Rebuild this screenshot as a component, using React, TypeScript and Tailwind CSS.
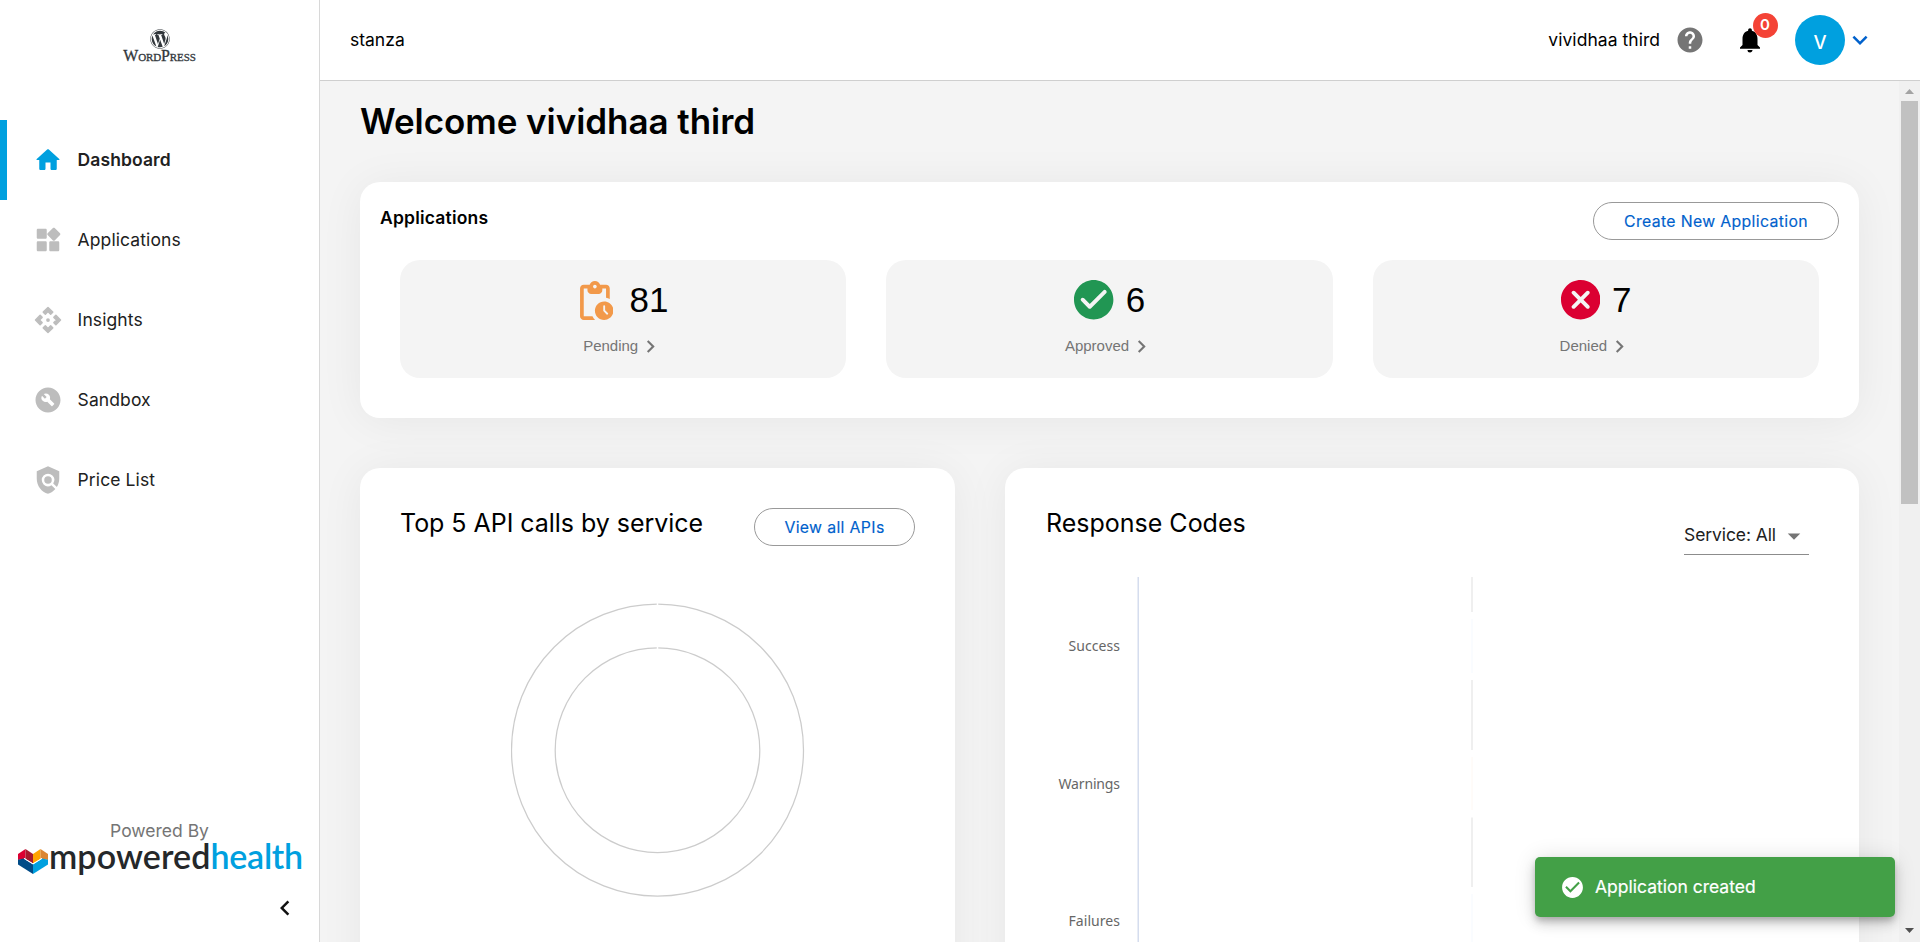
import React from "react";
import { FaWordpress } from "react-icons/fa";
import {
  MdArrowDropDown,
  MdBuildCircle,
  MdCheckCircle,
  MdChevronLeft,
  MdChevronRight,
  MdExpandMore,
  MdHelp,
  MdNotifications,
  MdPolicy,
} from "react-icons/md";

type IconProps = { className?: string };

const HomeIcon = ({ className }: IconProps) => (
  <svg viewBox="0 0 24 24" className={className} fill="currentColor">
    <path d="M10 19v-5h4v5c0 .55.45 1 1 1h3c.55 0 1-.45 1-1v-7h1.700c.46 0 .68-.57.33-.87L12.670 3.600c-.38-.34-.96-.34-1.340 0l-8.360 7.530c-.34.3-.13.87.33.87H5v7c0 .55.45 1 1 1h3c.55 0 1-.45 1-1z" />
  </svg>
);

const WidgetsIcon = ({ className }: IconProps) => (
  <svg viewBox="0 0 24 24" className={className} fill="currentColor">
    <path d="M13 14v6c0 .55.45 1 1 1h6c.55 0 1-.45 1-1v-6c0-.55-.45-1-1-1h-6c-.55 0-1 .45-1 1zm-9 7h6c.55 0 1-.45 1-1v-6c0-.55-.45-1-1-1H4c-.55 0-1 .45-1 1v6c0 .55.45 1 1 1zM3 4v6c0 .55.45 1 1 1h6c.55 0 1-.45 1-1V4c0-.55-.45-1-1-1H4c-.55 0-1 .45-1 1zm12.950-1.600L11.700 6.640c-.39.39-.39 1.020 0 1.410l4.250 4.250c.39.39 1.020.39 1.410 0l4.250-4.250c.39-.39.39-1.020 0-1.410L17.370 2.400c-.39-.39-1.030-.39-1.420 0z" />
  </svg>
);

const apiPiece = "M12 2 8.220 5.700 9.880 7.280 12 5.150 14.120 7.280 15.780 5.700z";

const ApiIcon = ({ className }: IconProps) => (
  <svg viewBox="0 0 24 24" className={className} fill="currentColor" stroke="currentColor" strokeWidth="1.2" strokeLinejoin="round">
    <path d={apiPiece} />
    <path d={apiPiece} transform="rotate(90 12 12)" />
    <path d={apiPiece} transform="rotate(180 12 12)" />
    <path d={apiPiece} transform="rotate(270 12 12)" />
    <circle cx="12" cy="12" r="0.900" />
  </svg>
);

const PendingIcon = () => (
  <svg viewBox="4 1 18 21" className="h-[39px] w-[33.5px] text-[#f2994a]" fill="currentColor">
    <path d="M17 12c-2.76 0-5 2.24-5 5s2.24 5 5 5 5-2.24 5-5-2.24-5-5-5zm1.3 7.0-1.65-1.65a.5.5 0 0 1-.15-.35V14.5a.5.5 0 0 1 1 0v2.29l1.5 1.5a.5.5 0 0 1-.7.71zM18 3h-3.18C14.4 1.84 13.3 1 12 1s-2.4.84-2.82 2H6c-1.1 0-2 .9-2 2v15c0 1.1.9 2 2 2h6.11c-.59-.57-1.07-1.25-1.42-2H6V5h2v1c0 1.1.9 2 2 2h4c1.1 0 2-.9 2-2V5h2v5.08c.71.1 1.38.31 2 .6V5c0-1.1-.9-2-2-2zm-6 2c-.55 0-1-.45-1-1s.45-1 1-1 1 .45 1 1-.45 1-1 1z" />
  </svg>
);

const ApprovedIcon = () => (
  <svg viewBox="2 2 20 20" className="h-[39.4px] w-[39.4px] text-[#219653]" fill="currentColor">
    <path d="M12 2C6.48 2 2 6.48 2 12s4.48 10 10 10 10-4.48 10-10S17.52 2 12 2zM9.29 16.29 5.7 12.7a.9959.9959 0 0 1 0-1.41c.39-.39 1.02-.39 1.41 0L10 14.17l6.88-6.88c.39-.39 1.02-.39 1.41 0 .39.39.39 1.02 0 1.41l-7.59 7.59c-.38.39-1.02.39-1.41 0z" />
  </svg>
);

const DeniedIcon = () => (
  <svg viewBox="2 2 20 20" className="h-[39.4px] w-[39.4px] text-[#db0032]" fill="currentColor">
    <path d="M12 2C6.47 2 2 6.47 2 12s4.47 10 10 10 10-4.47 10-10S17.53 2 12 2zm4.3 14.3c-.39.39-1.02.39-1.41 0L12 13.41 9.11 16.3c-.39.39-1.02.39-1.41 0a.9959.9959 0 0 1 0-1.41L10.59 12 7.7 9.11a.9959.9959 0 0 1 0-1.41c.39-.39 1.02-.39 1.41 0L12 10.59l2.89-2.89c.39-.39 1.02-.39 1.41 0 .39.39.39 1.02 0 1.41L13.41 12l2.89 2.89c.38.38.38 1.02 0 1.41z" />
  </svg>
);

const HeartLogo = () => (
  <svg viewBox="0 0 30 25" className="h-[25px] w-[30px] shrink-0">
    <path d="M7.500 0 0 5v6l7.500-1.500z" fill="#db0032" />
    <path d="M7.500 0 15 5v9.500L7.500 10z" fill="#a6192e" />
    <path d="M22.500 0 15 5v9.500l7.500-4.500z" fill="#ffa300" />
    <path d="M22.500 0 30 5v6l-7.500-1.500z" fill="#dc8633" />
    <path d="M0 10.800 5.500 9.500 15 15.500V25L0 15.500z" fill="#004b87" />
    <path d="m30 10.800-5.500-1.300-9.500 6V25l15-9.500z" fill="#00a0df" />
    <path d="m6 9.300 9 5.500 9-5.500" fill="none" stroke="#fff" strokeWidth="1" />
  </svg>
);

const navItems = [
  { label: "Dashboard", icon: HomeIcon, active: true },
  { label: "Applications", icon: WidgetsIcon, active: false },
  { label: "Insights", icon: ApiIcon, active: false },
  { label: "Sandbox", icon: MdBuildCircle, active: false },
  { label: "Price List", icon: MdPolicy, active: false },
];

const stats = [
  { value: "81", label: "Pending", icon: PendingIcon, gap: "gap-[16px] pl-[2px]" },
  { value: "6", label: "Approved", icon: ApprovedIcon, gap: "gap-[12px] pl-[0.500px]" },
  { value: "7", label: "Denied", icon: DeniedIcon, gap: "gap-[12px] pl-[0.500px]" },
];

function Sidebar() {
  return (
    <aside className="flex w-80 shrink-0 flex-col border-r border-[#d8d8d8] bg-white">
      <div className="flex h-[120px] flex-col items-center pt-[29px] text-[#32373c]">
        <FaWordpress className="h-5 w-5" />
        <span className="font-['Liberation_Serif',serif] text-[15.900px] leading-[14px] tracking-[-0.1px] [font-variant:small-caps] [-webkit-text-stroke:0.3px]">
          WordPress
        </span>
      </div>
      <nav className="flex flex-col">
        {navItems.map(({ label, icon: Icon, active }) => (
          <a
            key={label}
            className={
              active
                ? "flex h-20 items-center border-l-[7px] border-[#00a0df] pl-[26px] font-semibold"
                : "flex h-20 items-center border-l-[7px] border-transparent pl-[26px]"
            }
          >
            <Icon className={active ? "h-[30px] w-[30px] text-[#00a0df]" : "h-[30px] w-[30px] text-[#bdbdbd]"} />
            <span className="ml-[14.600px] text-[17.500px] leading-6 tracking-[0.1px] text-[#212121]">{label}</span>
          </a>
        ))}
      </nav>
      <div className="mt-auto flex h-[123px] flex-col">
        <div className="text-center text-[17.500px] leading-6 text-[#757575]">Powered By</div>
        <div className="flex h-[34px] items-start pt-[6px] pl-[18px]">
          <HeartLogo />
          <span className="-mt-[10px] pl-px font-['Lato',sans-serif] text-[34px] leading-[34px] font-semibold tracking-[0.12px] text-[#25282a]">
            mpowered<span className="tracking-[-0.28px] text-[#00a0df]">health</span>
          </span>
        </div>
        <button className="mt-[16px] mr-[19px] self-end text-[#111]">
          <MdChevronLeft className="h-[30px] w-[30px]" />
        </button>
      </div>
    </aside>
  );
}

function Header() {
  return (
    <header className="flex h-[81px] shrink-0 items-center border-b border-[#cfcfcf] bg-white pl-[30px] text-[17.500px] leading-6 text-black">
      <span>stanza</span>
      <span className="ml-auto tracking-[0.04px]">vividhaa third</span>
      <MdHelp className="ml-[15px] h-[30px] w-[30px] text-[#757575]" />
      <div className="relative ml-[30px] h-[30px] w-[30px]">
        <MdNotifications className="h-[30px] w-[30px]" />
        <span className="absolute -top-[12.500px] left-[17.500px] flex h-[25px] w-[25px] items-center justify-center rounded-full bg-[#f44336] text-[15px] font-semibold text-white">
          0
        </span>
      </div>
      <div className="ml-[30px] flex h-[50px] w-[50px] items-center justify-center rounded-full bg-[#00a0df] pt-1 text-[18.500px] font-medium text-white">
        V
      </div>
      <MdExpandMore className="mr-[45px] h-[30px] w-[30px] text-[#0061cc]" />
    </header>
  );
}

function PillButton({ children, className }: { children: React.ReactNode; className: string }) {
  return (
    <button
      className={`h-[38px] rounded-full border border-[#999] pt-px text-[15.800px] leading-none tracking-[0.36px] whitespace-nowrap text-[#0061cc] [-webkit-text-stroke:0.15px] ${className}`}
    >
      {children}
    </button>
  );
}

function DonutChart() {
  return (
    <svg viewBox="0 0 294 294" className="mt-[57px] h-[294px] w-[294px] self-center" fill="none" stroke="#ccc" strokeWidth="1.250">
      <circle cx="146.500" cy="147.200" r="146" />
      <circle cx="146.500" cy="147.200" r="102.300" />
      <path d="M146.500 0v2.500M146.500 44v2.500" stroke="#fff" strokeWidth="1.500" />
    </svg>
  );
}

function ResponseChart() {
  return (
    <svg viewBox="0 0 774 365" className="mt-[22px] h-[365px] w-[774px] font-['Noto_Sans',sans-serif] text-[14px]">
      <path d="M93.200 0v365" stroke="#ccd6eb" strokeWidth="1.250" />
      <path d="M427 0v35M427 103v70M427 240.500v69.500" stroke="#e6e6e6" strokeWidth="1.250" />
      <path d="M427 42v54M427 317v48" stroke="#f5f9fe" />
      <path d="M427 180v53" stroke="#fef8f3" />
      <g fill="#666" textAnchor="end">
        <text x="75" y="74" textLength="51.500">Success</text>
        <text x="75" y="211.500" textLength="61.500">Warnings</text>
        <text x="75" y="349" textLength="51.500">Failures</text>
      </g>
    </svg>
  );
}

const cardClass = "rounded-[20px] bg-white shadow-[0_3px_45px_rgba(0,0,0,0.06)]";

function Dashboard() {
  return (
    <div className="flex min-h-0 flex-1">
      <main className="flex min-w-0 flex-1 flex-col overflow-hidden bg-[#f4f4f4] pr-10 pl-10">
        <h1 className="mt-[19px] text-[35px] leading-[42px] font-semibold tracking-[-0.05px] text-black">Welcome vividhaa third</h1>
        <section className={`${cardClass} mt-[40px] h-[236px] shrink-0`}>
          <div className="flex justify-between px-5 pt-5">
            <h2 className="mt-[4px] text-[17.500px] leading-6 font-semibold tracking-[0.2px] text-black">Applications</h2>
            <PillButton className="w-[246px]">Create New Application</PillButton>
          </div>
          <div className="mt-5 grid grid-cols-3 gap-10 px-10">
            {stats.map(({ value, label, icon: Icon, gap }) => (
              <div key={label} className="flex h-[118px] flex-col items-center rounded-[20px] bg-[#f4f4f4] pt-5 font-['Liberation_Sans',sans-serif]">
                <div className={`flex h-10 items-center ${gap}`}>
                  <Icon />
                  <span className="text-[35px] leading-10 text-black">{value}</span>
                </div>
                <div className="mt-[11px] flex h-[30px] items-center text-[15px] text-[#757575]">
                  {label}
                  <MdChevronRight className="h-[25px] w-[25px]" />
                </div>
              </div>
            ))}
          </div>
        </section>
        <div className="mt-[50px] flex gap-[50px]">
          <section className={`${cardClass} flex h-[600px] w-[595px] shrink-0 flex-col px-10 pt-10`}>
            <div className="flex justify-between">
              <h2 className="text-[25px] leading-[30px] tracking-[-0.04px] text-black">Top 5 API calls by service</h2>
              <PillButton className="w-[161px]">View all APIs</PillButton>
            </div>
            <DonutChart />
          </section>
          <section className={`${cardClass} flex h-[600px] flex-1 flex-col pt-10 pl-10`}>
            <div className="flex h-[47px] justify-between pr-[50px]">
              <h2 className="pl-px text-[25px] leading-[30px] text-black">Response Codes</h2>
              <div className="mt-[9px] flex h-[38px] w-[125px] items-center border-b border-[#8c8c8c] text-[17.500px] tracking-[-0.09px] whitespace-nowrap text-[#212121]">
                Service: All
                <MdArrowDropDown className="ml-auto h-[30px] w-[30px] shrink-0 text-[#757575]" />
              </div>
            </div>
            <ResponseChart />
          </section>
        </div>
      </main>
      <div className="flex w-[21px] shrink-0 flex-col items-center bg-[#f0f0f0]">
        <svg viewBox="0 0 9 5" className="mt-2 h-[5px] w-[9px]"><path d="M4.500 0 9 5H0z" fill="#a3a3a3" /></svg>
        <div className="mt-[7px] h-[403px] w-[17px] bg-[#c1c1c1]" />
        <svg viewBox="0 0 9 5" className="mt-auto mb-[9px] h-[5px] w-[9px]"><path d="M4.500 5 9 0H0z" fill="#505050" /></svg>
      </div>
    </div>
  );
}

export default function App() {
  return (
    <div className="relative flex h-[942px] w-full overflow-hidden bg-white font-['Inter',sans-serif]">
      <Sidebar />
      <div className="flex min-w-0 flex-1 flex-col">
        <Header />
        <Dashboard />
      </div>
      <div className="absolute right-[25px] bottom-[25px] flex h-[60px] w-[360px] items-center rounded-[5px] bg-[#43a047] pl-[25px] text-[17.500px] text-white shadow-[0_4px_6px_-1px_rgba(0,0,0,0.2),0_7px_12px_rgba(0,0,0,0.14),0_1px_22px_rgba(0,0,0,0.12)] [-webkit-text-stroke:0.2px]">
        <MdCheckCircle className="mr-[10px] h-[25px] w-[25px]" />
        Application created
      </div>
    </div>
  );
}
